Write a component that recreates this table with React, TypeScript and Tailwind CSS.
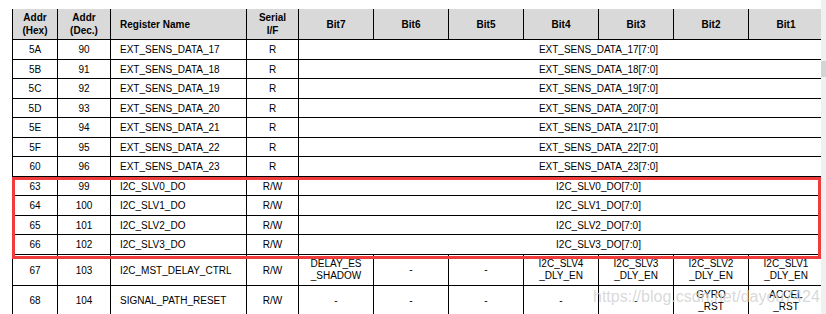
import React from "react";

type Row = {
  hex: string;
  dec: string;
  name: string;
  rw: string;
  h: number;
  span?: string;
  bits?: string[];
};

const rows: Row[] = [
  { hex: "5A", dec: "90", name: "EXT_SENS_DATA_17", rw: "R", h: 20, span: "EXT_SENS_DATA_17[7:0]" },
  { hex: "5B", dec: "91", name: "EXT_SENS_DATA_18", rw: "R", h: 19, span: "EXT_SENS_DATA_18[7:0]" },
  { hex: "5C", dec: "92", name: "EXT_SENS_DATA_19", rw: "R", h: 20, span: "EXT_SENS_DATA_19[7:0]" },
  { hex: "5D", dec: "93", name: "EXT_SENS_DATA_20", rw: "R", h: 19, span: "EXT_SENS_DATA_20[7:0]" },
  { hex: "5E", dec: "94", name: "EXT_SENS_DATA_21", rw: "R", h: 20, span: "EXT_SENS_DATA_21[7:0]" },
  { hex: "5F", dec: "95", name: "EXT_SENS_DATA_22", rw: "R", h: 19, span: "EXT_SENS_DATA_22[7:0]" },
  { hex: "60", dec: "96", name: "EXT_SENS_DATA_23", rw: "R", h: 20, span: "EXT_SENS_DATA_23[7:0]" },
  { hex: "63", dec: "99", name: "I2C_SLV0_DO", rw: "R/W", h: 19, span: "I2C_SLV0_DO[7:0]" },
  { hex: "64", dec: "100", name: "I2C_SLV1_DO", rw: "R/W", h: 20, span: "I2C_SLV1_DO[7:0]" },
  { hex: "65", dec: "101", name: "I2C_SLV2_DO", rw: "R/W", h: 19, span: "I2C_SLV2_DO[7:0]" },
  { hex: "66", dec: "102", name: "I2C_SLV3_DO", rw: "R/W", h: 20, span: "I2C_SLV3_DO[7:0]" },
  {
    hex: "67",
    dec: "103",
    name: "I2C_MST_DELAY_CTRL",
    rw: "R/W",
    h: 31,
    bits: ["DELAY_ES\n_SHADOW", "-", "-", "I2C_SLV4\n_DLY_EN", "I2C_SLV3\n_DLY_EN", "I2C_SLV2\n_DLY_EN", "I2C_SLV1\n_DLY_EN", "I2C_SLV0\n_DLY_EN"],
  },
  {
    hex: "68",
    dec: "104",
    name: "SIGNAL_PATH_RESET",
    rw: "R/W",
    h: 30,
    bits: ["-", "-", "-", "-", "-", "GYRO\n_RST", "ACCEL\n_RST", "TEMP\n_RST"],
  },
];

const cell = "border-r border-b border-black flex items-center justify-center text-center";

function Lines({ text }: { text: string }) {
  return (
    <div className="leading-[12px]">
      {text.split("\n").map((t, i) => (
        <div key={i}>{t}</div>
      ))}
    </div>
  );
}

export default function App() {
  return (
    <div
      className="relative w-[826px] h-[314px] bg-white flex overflow-hidden text-black text-[10px]"
      style={{ fontFamily: '"Liberation Sans", Arial, sans-serif' }}
    >
      <div className="w-[821px] h-full overflow-hidden pt-[9px] pl-[12px]">
        <div className="w-[888px] border-l border-black grid grid-cols-[45px_53px_136px_52px_repeat(8,75px)]">
          {/* header */}
          <div className={`${cell} h-[31px] bg-[#d9d9d9] font-bold leading-[13px]`}>
            <div>Addr<br />(Hex)</div>
          </div>
          <div className={`${cell} h-[31px] bg-[#d9d9d9] font-bold leading-[13px]`}>
            <div>Addr<br />(Dec.)</div>
          </div>
          <div className="border-r border-b border-black h-[31px] bg-[#d9d9d9] font-bold flex items-center pl-[9px]">
            Register Name
          </div>
          <div className={`${cell} h-[31px] bg-[#d9d9d9] font-bold leading-[13px]`}>
            <div>Serial<br />I/F</div>
          </div>
          {["Bit7", "Bit6", "Bit5", "Bit4", "Bit3", "Bit2", "Bit1", "Bit0"].map((b) => (
            <div key={b} className={`${cell} h-[31px] bg-[#d9d9d9] font-bold`}>
              {b}
            </div>
          ))}

          {rows.map((r) => (
            <React.Fragment key={r.hex}>
              <div className={cell} style={{ height: r.h }}>{r.hex}</div>
              <div className={cell} style={{ height: r.h }}>{r.dec}</div>
              <div className="border-r border-b border-black flex items-center pl-[9px]" style={{ height: r.h }}>
                {r.name}
              </div>
              <div className={cell} style={{ height: r.h }}>{r.rw}</div>
              {r.span ? (
                <div className={`${cell} col-span-8`} style={{ height: r.h }}>
                  {r.span}
                </div>
              ) : (
                r.bits!.map((b, i) => (
                  <div key={i} className={cell} style={{ height: r.h }}>
                    <Lines text={b} />
                  </div>
                ))
              )}
            </React.Fragment>
          ))}
        </div>
      </div>

      {/* scrollbar */}
      <div className="w-[5px] h-full bg-[#f0f0f0] pt-[61px]">
        <div className="h-[16px] bg-[#d4d4d4]" />
      </div>

      {/* red highlight box */}
      <div className="absolute left-[12px] top-[177px] w-[809px] h-[82px] border-[3px] border-[#f03c3c] pointer-events-none" />

      {/* watermark */}
      <div className="absolute left-[593px] top-[289px] text-[16px] leading-[16px] text-[#cfcfcf]/80 whitespace-nowrap pointer-events-none">
        https://blog.csdn.net/dayou7424
      </div>
    </div>
  );
}
